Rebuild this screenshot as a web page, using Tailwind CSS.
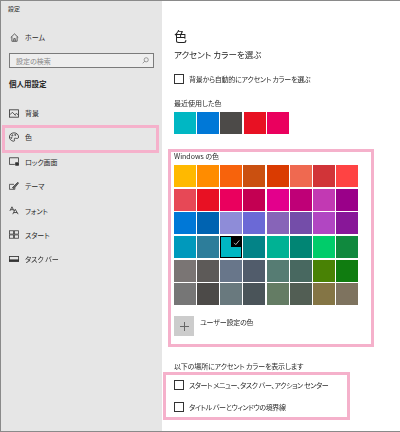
<!DOCTYPE html>
<html lang="ja">
<head>
  <meta charset="UTF-8">
  <title>設定</title>
  <script src="https://cdn.jsdelivr.net/npm/@tailwindcss/browser@4"></script>
</head>
<body class="bg-white">
  <div class="relative w-[400px] h-[432px] overflow-hidden flex border-t border-b border-l border-[#8a8a8a] font-['Noto_Sans_CJK_JP','Noto_Sans',sans-serif] [font-feature-settings:'palt'] text-[#2a2a2a] blur-[0.3px]">

    <!-- sidebar -->
    <aside class="w-[161px] shrink-0 bg-[#e6e6e6] flex flex-col text-[7px] leading-[12px]">
      <div class="pl-[7px] mt-[2px] h-[12px] text-[6px]">設定</div>
      <div class="flex items-center h-[16px] mt-[14px] pl-[9px] gap-[6px]">
        <svg class="w-[9px] h-[9px]" viewBox="0 0 12 12" fill="none" stroke="#333" stroke-width="1"><path d="M1 6 L6 1.2 L11 6 M2.5 5 V11 H9.5 V5 M5 11 V7.5 H7 V11"/></svg>
        <span>ホーム</span>
      </div>
      <div class="ml-[8px] mt-[8px] h-[15px] w-[145px] border border-[#7b7b7b] bg-[#eeeeee] flex items-center justify-between pl-[6px] pr-[4px] text-[#888]">
        <span>設定の検索</span>
        <svg class="w-[7px] h-[7px]" viewBox="0 0 10 10" fill="none" stroke="#777" stroke-width="1"><circle cx="6" cy="4" r="3"/><path d="M4 6 L1 9"/></svg>
      </div>
      <div class="pl-[8px] mt-[10px] h-[12px] font-bold text-[7.500px] text-[#222]">個人用設定</div>

      <nav class="mt-[15px] flex flex-col gap-[8.4px]">
        <div class="flex items-center h-[16px] pl-[8px] gap-[6px]">
          <svg class="w-[10px] h-[9px]" viewBox="0 0 12 11" fill="none" stroke="#333" stroke-width="1"><rect x=".5" y="1" width="11" height="9"/><path d="M1 7 L4 4 L8 8 M7 7 L9 5.5 L11 7"/></svg>
          <span>背景</span>
        </div>
        <div class="flex items-center h-[16px] pl-[8px] gap-[6px]">
          <svg class="w-[10px] h-[10px]" viewBox="0 0 12 12" fill="none" stroke="#333" stroke-width="1"><path d="M6 1 C9 1 11.500 3 11.500 6 C11.500 8 9.500 8 8 7.500 C6.500 7 6 8 6.500 9.500 C7 11 6 11.200 5 11 C2.500 10.500 .5 8.500 .5 6 C.5 3 3 1 6 1 Z"/><circle cx="4" cy="4" r=".7"/><circle cx="7.500" cy="3.500" r=".7"/><circle cx="2.800" cy="7" r=".7"/></svg>
          <span>色</span>
        </div>
        <div class="flex items-center h-[16px] pl-[8px] gap-[6px]">
          <svg class="w-[10px] h-[9px]" viewBox="0 0 12 10" fill="none" stroke="#333" stroke-width="1"><path d="M7 8.500 H.5 V.5 H11.500 V6"/><rect x="8" y="6.500" width="3.500" height="3" fill="#333"/></svg>
          <span>ロック画面</span>
        </div>
        <div class="flex items-center h-[16px] pl-[8px] gap-[6px]">
          <svg class="w-[10px] h-[10px]" viewBox="0 0 12 12" fill="none" stroke="#444" stroke-width="1"><path d="M.5 4 H6 M.5 4 V10 H7 V8"/><path d="M4 8 L10.500 1.500 L11.500 2.500 L6 9 Z" fill="#666"/></svg>
          <span>テーマ</span>
        </div>
        <div class="flex items-center h-[16px] pl-[8px] gap-[6px]">
          <svg class="w-[10px] h-[9px]" viewBox="0 0 12 11" fill="none" stroke="#333" stroke-width="1"><path d="M1 6 L3.500 1 L6 6 M2 4.500 H5 M4.500 10 L7.500 4 L11 10 M5.800 8 H9.800"/></svg>
          <span>フォント</span>
        </div>
        <div class="flex items-center h-[16px] pl-[8px] gap-[6px]">
          <svg class="w-[10px] h-[9px]" viewBox="0 0 12 10" fill="none" stroke="#444" stroke-width="1"><rect x=".5" y=".5" width="5" height="4"/><rect x="6.500" y=".5" width="5" height="4"/><rect x=".5" y="5.500" width="5" height="4"/><rect x="6.500" y="5.500" width="5" height="4"/></svg>
          <span>スタート</span>
        </div>
        <div class="flex items-center h-[16px] pl-[8px] gap-[6px]">
          <svg class="w-[10px] h-[6px]" viewBox="0 0 12 7" fill="#333"><rect width="12" height="7"/><rect x="1" y="1" width="10" height="3" fill="#e6e6e6"/></svg>
          <span>タスク バー</span>
        </div>
      </nav>
    </aside>

    <!-- main -->
    <main class="flex-1 pl-[12px] flex flex-col text-[7px] leading-[12px]">
      <h1 class="mt-[27px] text-[13px] leading-[16px] text-[#222]">色</h1>
      <h2 class="mt-[3px] text-[8.500px] leading-[14px] text-[#222]">アクセント カラーを選ぶ</h2>

      <label class="mt-[13px] flex items-center gap-[5px] h-[10px]">
        <span class="w-[10px] h-[10px] border border-[#333] shrink-0"></span>
        <span class="tracking-[-0.25px]">背景から自動的にアクセント カラーを選ぶ</span>
      </label>

      <div class="mt-[13px] h-[12px]">最近使用した色</div>
      <div class="mt-[3px] flex gap-[1.200px]">
        <div class="w-[22px] h-[22px] bg-[#00b7c3]"></div>
        <div class="w-[22px] h-[22px] bg-[#0078d7]"></div>
        <div class="w-[22px] h-[22px] bg-[#4c4a48]"></div>
        <div class="w-[22px] h-[22px] bg-[#e81123]"></div>
        <div class="w-[22px] h-[22px] bg-[#ea005e]"></div>
      </div>

      <div class="mt-[16px] h-[12px]">Windows の色</div>
      <div class="mt-[3px] grid grid-cols-[repeat(8,22px)] auto-rows-[22px] gap-x-[1.150px] gap-y-[1.700px]">
        <div class="bg-[#ffb900]"></div><div class="bg-[#ff8c00]"></div><div class="bg-[#f7630c]"></div><div class="bg-[#ca5010]"></div><div class="bg-[#da3b01]"></div><div class="bg-[#ef6950]"></div><div class="bg-[#d13438]"></div><div class="bg-[#ff4343]"></div>
        <div class="bg-[#e74856]"></div><div class="bg-[#e81123]"></div><div class="bg-[#ea005e]"></div><div class="bg-[#c30052]"></div><div class="bg-[#e3008c]"></div><div class="bg-[#bf0077]"></div><div class="bg-[#c239b3]"></div><div class="bg-[#9a0089]"></div>
        <div class="bg-[#0078d7]"></div><div class="bg-[#0063b1]"></div><div class="bg-[#8e8cd8]"></div><div class="bg-[#6b69d6]"></div><div class="bg-[#8764b8]"></div><div class="bg-[#744da9]"></div><div class="bg-[#b146c2]"></div><div class="bg-[#881798]"></div>
        <div class="bg-[#0099bc]"></div><div class="bg-[#2d7d9a]"></div>
        <div class="relative bg-[#00b7c3] border border-black">
          <div class="absolute top-0 right-0 w-[10px] h-[10px] bg-black flex items-center justify-center">
            <svg class="w-[7px] h-[7px]" viewBox="0 0 10 10" fill="none" stroke="#fff" stroke-width="1"><path d="M1.500 5.500 L4 8 L9 2"/></svg>
          </div>
        </div>
        <div class="bg-[#038387]"></div><div class="bg-[#00b294]"></div><div class="bg-[#018574]"></div><div class="bg-[#00cc6a]"></div><div class="bg-[#10893e]"></div>
        <div class="bg-[#7a7574]"></div><div class="bg-[#5d5a58]"></div><div class="bg-[#68768a]"></div><div class="bg-[#515c6b]"></div><div class="bg-[#567c73]"></div><div class="bg-[#486860]"></div><div class="bg-[#498205]"></div><div class="bg-[#107c10]"></div>
        <div class="bg-[#767676]"></div><div class="bg-[#4c4a48]"></div><div class="bg-[#69797e]"></div><div class="bg-[#4a5459]"></div><div class="bg-[#647c64]"></div><div class="bg-[#525e54]"></div><div class="bg-[#847545]"></div><div class="bg-[#7e735f]"></div>
      </div>

      <div class="mt-[11px] flex gap-[6px]">
        <div class="w-[20px] h-[20px] bg-[#cccccc] flex items-center justify-center">
          <svg class="w-[9px] h-[9px]" viewBox="0 0 9 9" stroke="#666" stroke-width="1"><path d="M4.500 0 V9 M0 4.500 H9"/></svg>
        </div>
        <span class="tracking-[-0.2px]">ユーザー設定の色</span>
      </div>

      <div class="mt-[23.500px] h-[12px] tracking-[-0.15px]">以下の場所にアクセント カラーを表示します</div>
      <label class="mt-[8px] flex items-center gap-[5px] h-[10px]">
        <span class="w-[10px] h-[10px] border border-[#333] shrink-0"></span>
        <span class="tracking-[-0.4px]">スタート メニュー、タスク バー、アクション センター</span>
      </label>
      <label class="mt-[12px] flex items-center gap-[5px] h-[10px]">
        <span class="w-[10px] h-[10px] border border-[#333] shrink-0"></span>
        <span class="tracking-[-0.38px]">タイトル バーとウィンドウの境界線</span>
      </label>
    </main>

    <!-- pink annotation frames -->
    <div class="absolute left-[1px] top-[124px] w-[157px] h-[28px] border-[3px] border-[#f5b1cb]"></div>
    <div class="absolute left-[167px] top-[148px] w-[206px] h-[198px] border-[3px] border-[#f5b1cb]"></div>
    <div class="absolute left-[162px] top-[371px] w-[187px] h-[48px] border-[3px] border-[#f5b1cb]"></div>
  </div>
</body>
</html>
